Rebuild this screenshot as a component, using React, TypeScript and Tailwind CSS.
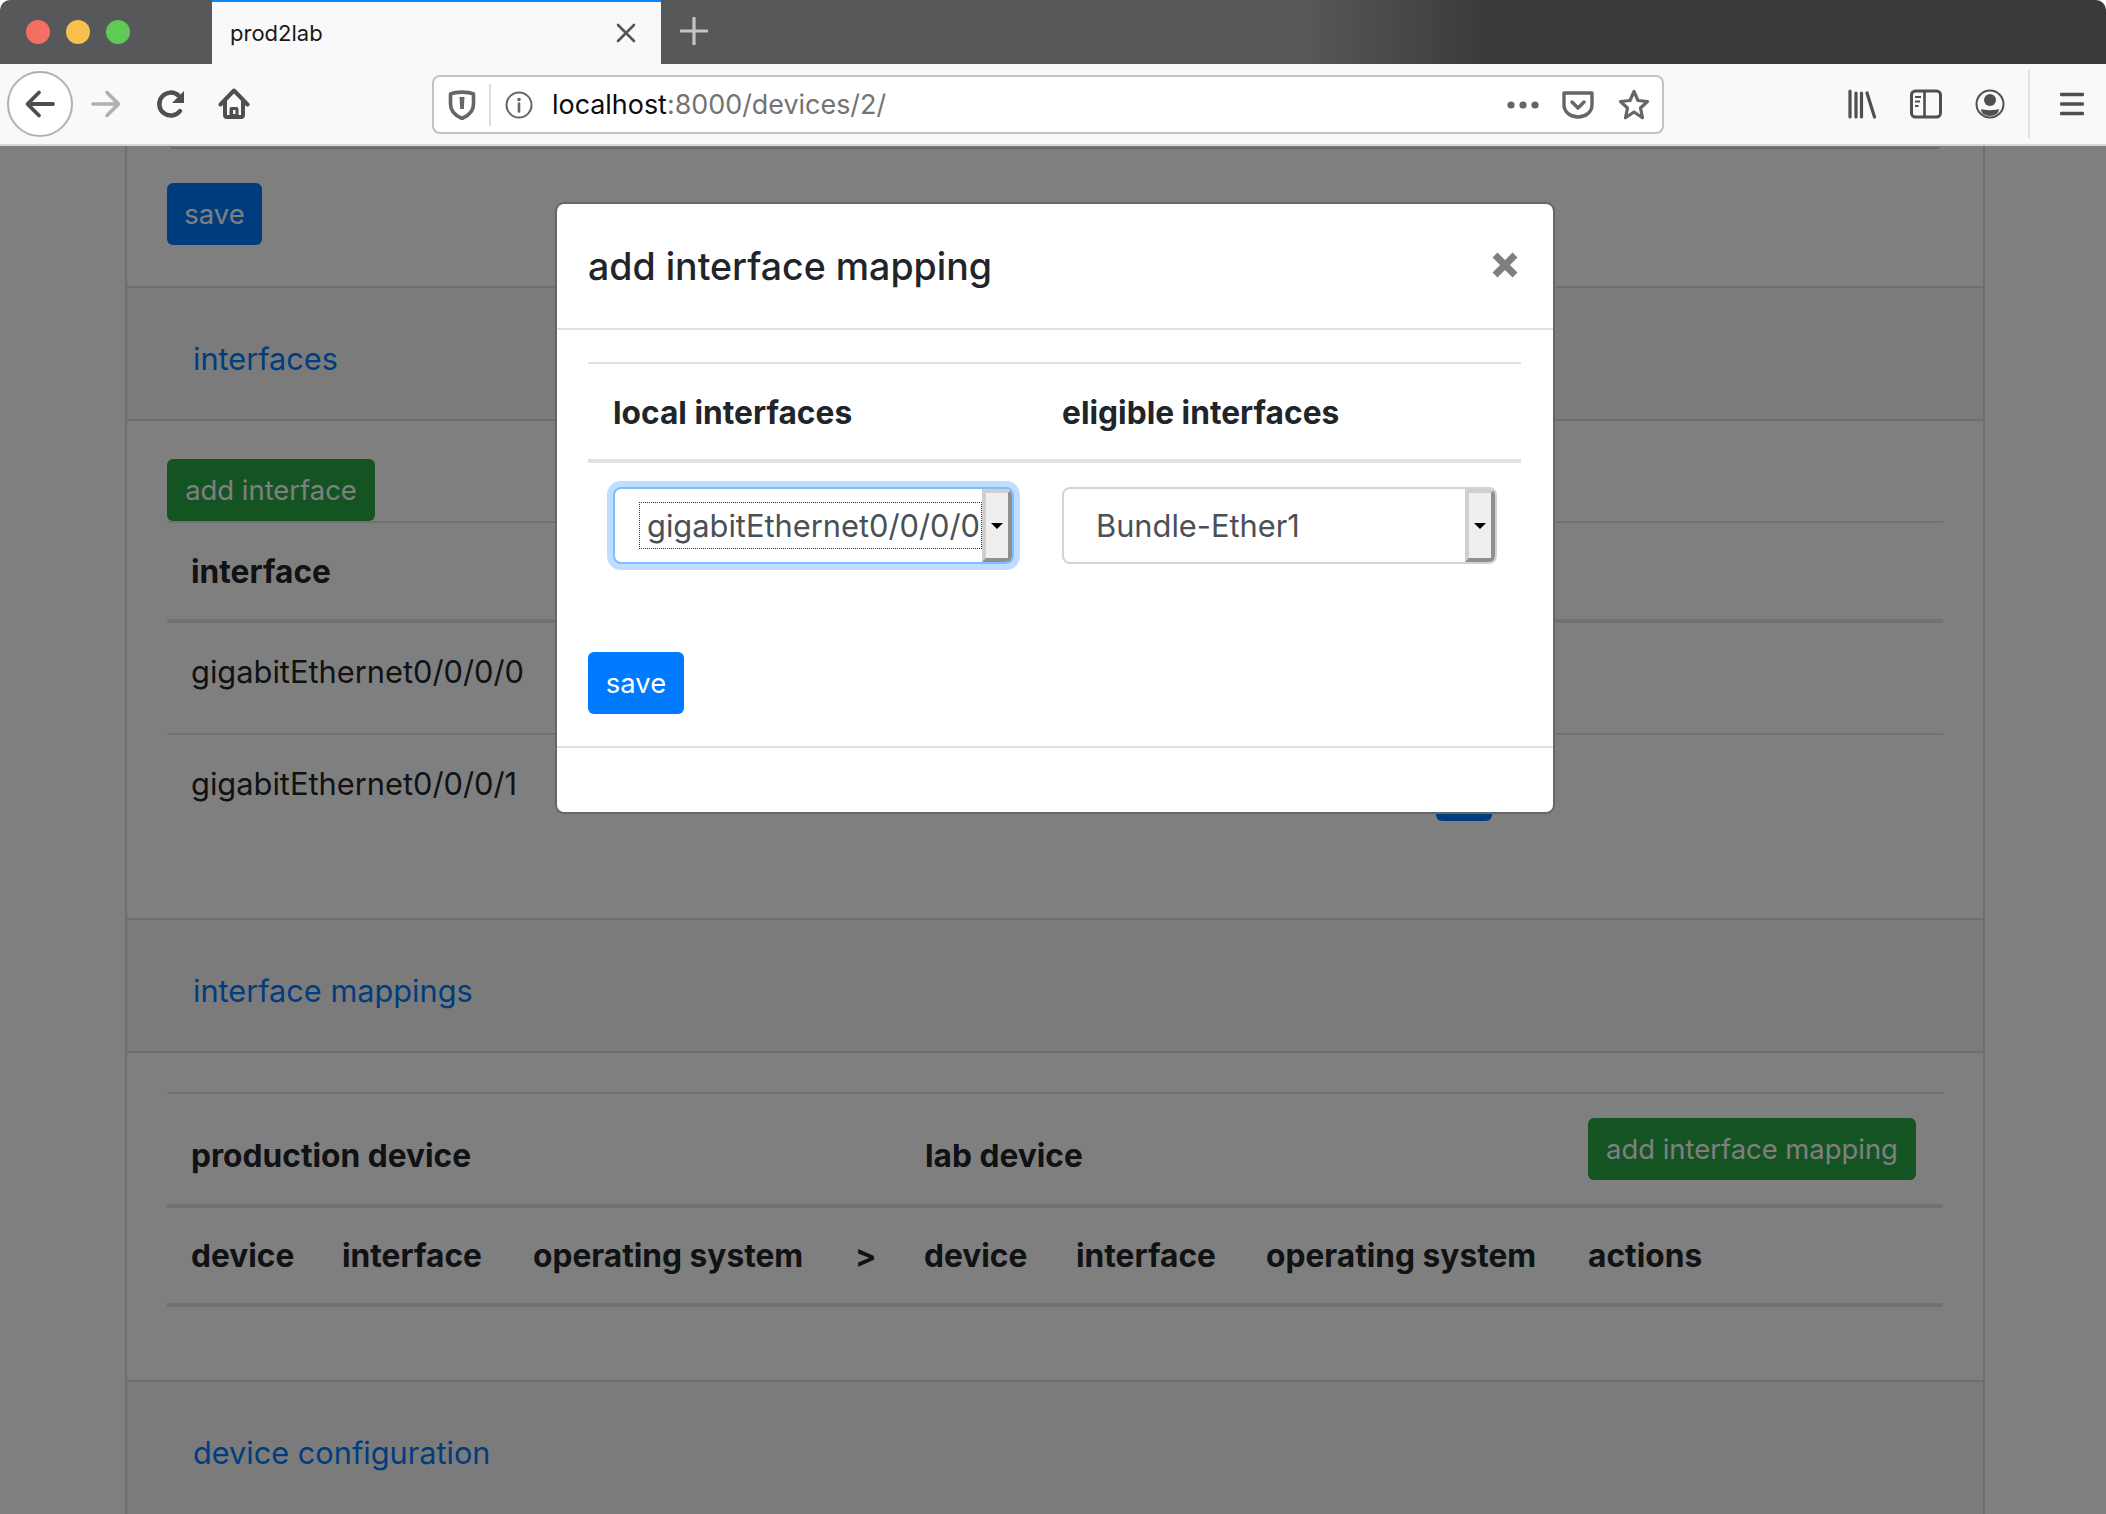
import React from "react";

const font = { fontFamily: "Inter, 'Liberation Sans', sans-serif" };

function Bevel() {
  return (
    <div className="w-[30px] self-stretch box-border bg-[#efefef] border-[4px] border-t-[#cfcfcf] border-l-[#cfcfcf] border-r-[#8f8f8f] border-b-[#8f8f8f] flex items-center justify-center">
      <svg width="14" height="8" viewBox="0 0 14 8"><path d="M1 1h12L7 7z" fill="#000" /></svg>
    </div>
  );
}

function Btn({ children, color, className = "" }: { children?: React.ReactNode; color: string; className?: string }) {
  return (
    <div className={`h-[62px] rounded-[6px] text-white text-[27.4px] pt-[2px] flex items-center justify-center ${color} ${className}`}>{children}</div>
  );
}

function CardHeader({ label, h = "h-[135px]" }: { label: string; h?: string }) {
  return (
    <div className={`${h} bg-[#f7f7f7] border-y-2 border-[#dcdcdc] -mb-[2px] pl-[66px] pt-[51px] text-[#007bff] text-[30.7px] leading-[40px]`}>
      {label}
    </div>
  );
}

function Th({ children, span = "" }: { children?: React.ReactNode; span?: string }) {
  return <div className={`pl-[24px] font-bold text-[31.7px] text-[#212529] whitespace-nowrap ${span}`}>{children}</div>;
}

function Page() {
  const cols = "grid grid-cols-[151px_191px_322px_69px_152px_190px_322px_1fr] items-center";
  return (
    <div className="ml-[125px] w-[1860px] border-x-2 border-[#dcdcdc] h-full">
      <div className="px-[40px]">
        <div className="h-[3px] mx-[3px] rounded-b-lg border-b-2 border-[#d2d2d2]" />
        <Btn color="bg-[#007bff]" className="w-[95px] mt-[34px]">save</Btn>
      </div>
      <div className="h-[41px]" />
      <CardHeader label="interfaces" />
      <div className="h-[499px] px-[40px] pt-[40px]">
        <Btn color="bg-[#28a745]" className="w-[208px]">add interface</Btn>
        <div className="border-t-2 border-[#dee2e6] h-[98px] pl-[24px] pt-[29px] font-bold text-[31.7px] leading-[40px] text-[#212529]">interface</div>
        <div className="border-t-4 border-[#dee2e6] h-[114px] pl-[24px] pt-[29px] text-[30.8px] leading-[40px] text-[#212529]">gigabitEthernet0/0/0/0</div>
        <div className="border-t-2 border-[#dee2e6] flex">
          <div className="w-[1269px] pl-[24px] pt-[29px] text-[30.8px] leading-[40px] text-[#212529]">gigabitEthernet0/0/0/1</div>
          <Btn color="bg-[#007bff]" className="w-[56px] mt-[24px]" />
        </div>
      </div>
      <CardHeader label="interface mappings" />
      <div className="h-[329px] px-[40px] pt-[41px]">
        <div className={`${cols} border-t-2 border-[#dee2e6] h-[112px]`}>
          <Th span="col-span-4 pt-[13px]">production device</Th>
          <Th span="col-span-3 pt-[13px] pl-[25px]">lab device</Th>
          <div className="pl-[24px] -mt-[1px]">
            <Btn color="bg-[#28a745]" className="w-[328px]">add interface mapping</Btn>
          </div>
        </div>
        <div className={`${cols} border-t-4 border-[#dee2e6] h-[99px]`}>
          <Th>device</Th>
          <Th>interface</Th>
          <Th>operating system</Th>
          <Th>&gt;</Th>
          <Th>device</Th>
          <Th>interface</Th>
          <Th>operating system</Th>
          <Th>actions</Th>
        </div>
        <div className="border-t-4 border-[#dee2e6]" />
      </div>
      <CardHeader label="device configuration" h="h-[200px]" />
    </div>
  );
}

function Select({ text, focused, w }: { text: string; focused?: boolean; w: string }) {
  return (
    <div className={`${w} h-[77px] bg-white rounded-[8px] border-2 flex items-stretch overflow-hidden ${focused ? "border-[#80bdff] shadow-[0_0_0_6px_#bfdeff]" : "border-[#ced4da]"}`}>
      <div className="flex-1 flex items-center min-w-0 text-[#495057] text-[30.8px]">
        {focused ? (
          <div className="ml-[24px] w-[343px] h-[47px] border border-dotted border-[#333] flex items-center pl-[7px] pt-[2px] whitespace-nowrap">{text}</div>
        ) : (
          <div className="ml-[32px] pt-[2px] whitespace-nowrap">{text}</div>
        )}
      </div>
      <Bevel />
    </div>
  );
}

function Modal() {
  return (
    <div className="absolute left-[555px] top-[56px] w-[1000px] h-[612px] bg-white rounded-[9px] border-2 border-[#666]">
      <div className="h-[126px] border-b-2 border-[#dee2e6] flex pl-[31px] pr-[34px] items-start">
        <div className="mt-[39px] text-[37.5px] leading-[48px] font-[550] text-[#212529]">add interface mapping</div>
        <svg className="ml-auto mt-[47px]" width="28" height="28" viewBox="0 0 28 28">
          <path d="M4 4l20 20M24 4L4 24" stroke="#7f7f7f" strokeWidth="7" />
        </svg>
      </div>
      <div className="pl-[31px] pr-[32px] pt-[32px]">
        <div className="border-t-2 border-[#dee2e6] h-[97px] flex items-center pt-[2px] font-bold text-[31.7px] text-[#212529]">
          <div className="w-[474px] pl-[25px]">local interfaces</div>
          <div>eligible interfaces</div>
        </div>
        <div className="border-t-4 border-[#dee2e6] h-[193px] pt-[24px] flex">
          <div className="ml-[25px] mr-[48px]"><Select text="gigabitEthernet0/0/0/0" focused w="w-[401px]" /></div>
          <Select text="Bundle-Ether1" w="w-[435px]" />
        </div>
        <Btn color="bg-[#007bff]" className="w-[96px]">save</Btn>
      </div>
      <div className="mt-[32px] border-t-2 border-[#dee2e6]" />
    </div>
  );
}

const Ic = ({ children, w = 32, h = 32, vb = "0 0 32 32", className = "" }: { children: React.ReactNode; w?: number; h?: number; vb?: string; className?: string }) => (
  <svg width={w} height={h} viewBox={vb} fill="none" className={`shrink-0 ${className}`}>{children}</svg>
);

function Chrome() {
  return (
    <>
      <div className="h-[64px] bg-[linear-gradient(90deg,#575859_0%,#565759_62%,#39393b_71%,#39393b_100%)] rounded-t-[10px] flex items-stretch">
        <div className="w-[212px] flex items-center gap-[16px] pl-[26px]">
          <div className="w-[24px] h-[24px] rounded-full bg-[#f46e63]" />
          <div className="w-[24px] h-[24px] rounded-full bg-[#f7c04f]" />
          <div className="w-[24px] h-[24px] rounded-full bg-[#61c956]" />
        </div>
        <div className="w-[449px] bg-[#f9f9fa] border-t-2 border-[#0a84ff] flex items-center pl-[18px] pr-[25px] text-[22px] text-[#18181a]">
          <span>prod2lab</span>
          <Ic w={20} h={20} vb="0 0 20 20" className="ml-auto">
            <path d="M2 2l16 16M18 2L2 18" stroke="#555" strokeWidth="2.6" strokeLinecap="round" />
          </Ic>
        </div>
        <div className="flex items-start pl-[19px] pt-[17px]">
          <Ic w={28} h={28} vb="0 0 28 28">
            <path d="M14 1v26M1 14h26" stroke="#c4c4c6" strokeWidth="3.2" strokeLinecap="round" />
          </Ic>
        </div>
      </div>
      <div className="h-[82px] bg-[#f9f9fa] border-b-2 border-[#d7d7db] flex items-center pl-[7px]">
        <div className="w-[66px] h-[66px] rounded-full bg-white border-2 border-[#b1b1b3] flex items-center justify-center shrink-0">
          <Ic>
            <path d="M29 16H4M15 4.500L3.500 16 15 27.500" stroke="#4f4f51" strokeWidth="3.800" strokeLinecap="round" strokeLinejoin="round" />
          </Ic>
        </div>
        <Ic className="ml-[17px]">
          <path d="M3 16h25M17 4.500L28.500 16 17 27.500" stroke="#b1b1b3" strokeWidth="3.600" strokeLinecap="round" strokeLinejoin="round" />
        </Ic>
        <Ic className="ml-[33px]">
          <path d="M25 23A11.500 11.500 0 1 1 23.500 7.500" stroke="#4f4f51" strokeWidth="4.400" strokeLinecap="round" />
          <path d="M29 3v12H17z" fill="#4f4f51" />
        </Ic>
        <Ic className="ml-[31px]">
          <path d="M2.500 16.500L16 2.500l13.500 14" stroke="#4f4f51" strokeWidth="4" strokeLinecap="round" strokeLinejoin="round" />
          <path d="M7 13v14a2 2 0 0 0 2 2h14a2 2 0 0 0 2-2V13" stroke="#4f4f51" strokeWidth="4" />
          <path d="M11.500 29V21a2 2 0 0 1 2-2h5a2 2 0 0 1 2 2v8" fill="#4f4f51" />
          <rect x="15" y="22" width="2.500" height="4" fill="#f9f9fa" />
        </Ic>
        <div className="ml-[182px] w-[1232px] h-[59px] mt-[1px] bg-white border-2 border-[#c2c2c2] rounded-[8px] flex items-center">
          <Ic w={28} h={30} vb="0 0 28 30" className="ml-[14px]">
            <path d="M2.500 4C8 1.500 20 1.500 25.500 4v10c0 7-5.500 12-11.500 14.500C8 26 2.500 21 2.500 14z" stroke="#666" strokeWidth="3.600" strokeLinejoin="round" />
            <path d="M11.500 7h5l-.7 12h-3.600z" fill="#666" />
          </Ic>
          <div className="ml-[13px] w-[2px] h-[42px] bg-[#dcdcdc]" />
          <Ic w={28} h={28} vb="0 0 28 28" className="ml-[14px]">
            <circle cx="14" cy="14" r="12.500" stroke="#666" strokeWidth="2" />
            <circle cx="14" cy="8.500" r="1.800" fill="#666" />
            <path d="M14 12.500v8" stroke="#666" strokeWidth="2.600" strokeLinecap="round" />
          </Ic>
          <div className="ml-[19px] text-[26.9px] whitespace-nowrap text-[#0c0c0d]">localhost<span className="text-[#737373]">:8000/devices/2/</span></div>
          <div className="ml-auto flex items-center">
            <Ic w={34} h={10} vb="0 0 34 10" className="mr-[1px]">
              <circle cx="5" cy="5" r="3.600" fill="#666" /><circle cx="17" cy="5" r="3.600" fill="#666" /><circle cx="29" cy="5" r="3.600" fill="#666" />
            </Ic>
            <Ic className="ml-[21px]">
              <path d="M2 4h28v12c0 7-6.500 12-14 12S2 23 2 16z" stroke="#666" strokeWidth="3.400" strokeLinejoin="round" />
              <path d="M10 13l6 6 6-6" stroke="#666" strokeWidth="3.400" strokeLinecap="round" strokeLinejoin="round" />
            </Ic>
            <Ic className="ml-[24px] mr-[12px]">
              <path d="M16 2.500l4 9 9.500 1-7 6.500 2 9.800L16 23l-8.500 5.800 2-9.800-7-6.500 9.500-1z" stroke="#666" strokeWidth="3.200" strokeLinejoin="round" />
            </Ic>
          </div>
        </div>
        <Ic className="ml-[183px]" w={32} h={30} vb="0 0 32 30">
          <path d="M3 2v26M9 4v24M14.500 4v24M20 4l7.500 24" stroke="#4f4f51" strokeWidth="3.200" strokeLinecap="round" />
        </Ic>
        <Ic className="ml-[31px]" w={32} h={30} vb="0 0 32 30">
          <rect x="1.500" y="2" width="29" height="26" rx="4" stroke="#4f4f51" strokeWidth="3" />
          <path d="M14.500 2v26" stroke="#4f4f51" strokeWidth="2.600" />
          <path d="M5 8h6M5 12.500h5M5 17h3.500" stroke="#4f4f51" strokeWidth="2.200" />
        </Ic>
        <Ic className="ml-[33px]" w={30} h={32} vb="0 0 30 32">
          <circle cx="15" cy="16" r="13.500" stroke="#4f4f51" strokeWidth="2" />
          <circle cx="15" cy="12" r="6" fill="#4f4f51" />
          <path d="M6 21c3 1.500 15 1.500 18 0 0 4-4 7-9 7s-9-3-9-7z" fill="#4f4f51" />
        </Ic>
        <div className="ml-[23px] w-[2px] h-[68px] bg-[#e2e2e4]" />
        <Ic className="ml-[30px]" w={24} h={26} vb="0 0 24 26">
          <path d="M1.500 3.500h21M1.500 13h21M1.500 22.500h21" stroke="#4f4f51" strokeWidth="3.400" strokeLinecap="round" />
        </Ic>
      </div>
    </>
  );
}

export default function App() {
  return (
    <div className="w-[2106px] h-[1514px] overflow-hidden flex flex-col bg-white" style={font}>
      <Chrome />
      <div className="relative flex-1 min-h-0 overflow-hidden bg-white">
        <Page />
        <div className="absolute inset-0 bg-black/50" />
        <Modal />
      </div>
    </div>
  );
}
